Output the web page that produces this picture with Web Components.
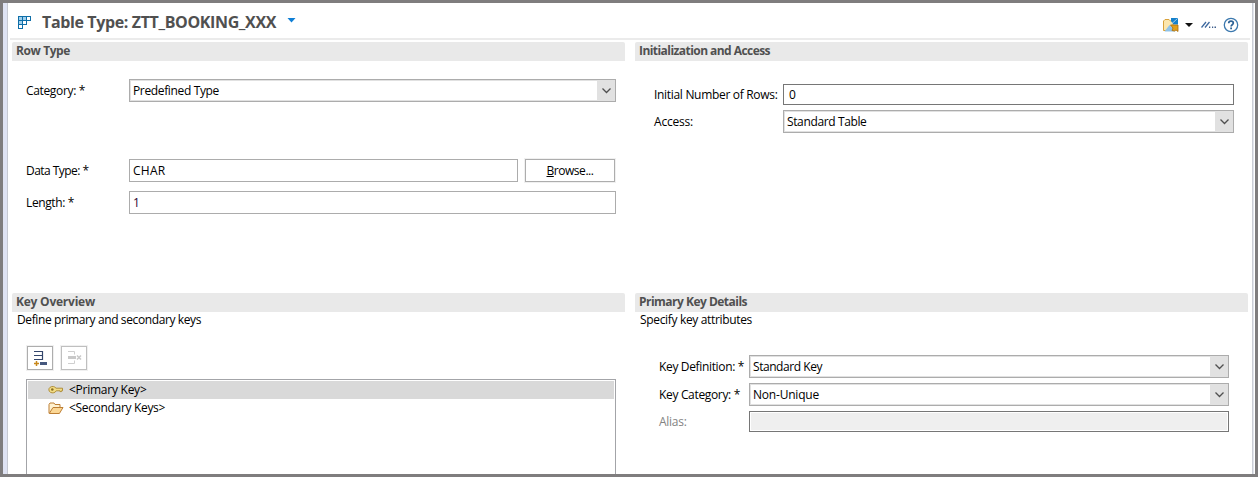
<!DOCTYPE html>
<html lang="en">
<head>
<meta charset="utf-8">
<title>Table Type: ZTT_BOOKING_XXX</title>
<style>
html,body{margin:0;height:100%;overflow:hidden}
body{font:12px/18px "Open Sans","Noto Sans",sans-serif;color:#000}
.form{display:grid;align-items:center}
.row-type{grid-template-columns:103px 389px 98px;grid-template-rows:23px 57px 23px 9px 23px;padding:18px 0 0 14px}
.access{grid-template-columns:129px 451px;grid-template-rows:21px 5px 23px;padding:23px 0 0 19px}
.details{grid-template-columns:90px 480px;grid-template-rows:23px 5px 23px 5px 21px;padding:25px 0 0 24px}
.span{grid-column:2/4}
.r3{grid-row:3}.r5{grid-row:5}
.push{margin-left:7px;width:90px}
.disabled{color:#838383}
.bar{display:flex;gap:8px;padding:17px 0 9px 15px}
</style>
</head>
<body>
<editor-frame>
  <editor-header slot="head"><fit-text width="233">Table Type: ZTT_BOOKING_XXX</fit-text></editor-header>
  <form-section heading="Row Type" hw="53">
    <div class="form row-type">
      <fit-text width="58">Category: *</fit-text>
      <combo-box class="span"><fit-text width="85">Predefined Type</fit-text></combo-box>
      <fit-text class="r3" width="61.5">Data Type: *</fit-text>
      <text-field class="r3"><fit-text width="31.5">CHAR</fit-text></text-field>
      <push-button class="r3 push"><fit-text width="46"><u>B</u>rowse...</fit-text></push-button>
      <fit-text class="r5" width="47">Length: *</fit-text>
      <text-field class="r5 span" style="color:#2c0030">1</text-field>
    </div>
  </form-section>
  <form-section heading="Initialization and Access" hw="130">
    <div class="form access">
      <fit-text width="122.5">Initial Number of Rows:</fit-text>
      <text-field dark>0</text-field>
      <fit-text class="r3" width="38">Access:</fit-text>
      <combo-box class="r3"><fit-text width="78.5">Standard Table</fit-text></combo-box>
    </div>
  </form-section>
  <form-section heading="Key Overview" hw="78">
    <fit-text slot="description" width="183">Define primary and secondary keys</fit-text>
    <div class="bar"><tool-button icon="add"></tool-button><tool-button icon="remove" disabled></tool-button></div>
    <key-tree>
      <tree-item icon="key" selected><fit-text width="76.5">&lt;Primary Key&gt;</fit-text></tree-item>
      <tree-item icon="folder"><fit-text width="95">&lt;Secondary Keys&gt;</fit-text></tree-item>
    </key-tree>
  </form-section>
  <form-section heading="Primary Key Details" hw="107">
    <fit-text slot="description" width="111">Specify key attributes</fit-text>
    <div class="form details">
      <fit-text width="84">Key Definition: *</fit-text>
      <combo-box><fit-text width="68">Standard Key</fit-text></combo-box>
      <fit-text class="r3" width="80">Key Category: *</fit-text>
      <combo-box class="r3"><fit-text width="65">Non-Unique</fit-text></combo-box>
      <fit-text class="r5 disabled" width="26.5">Alias:</fit-text>
      <text-field class="r5" dark disabled></text-field>
    </div>
  </form-section>
</editor-frame>
<script>
const icons = {
  table: `<svg width="14" height="14" viewBox="0 0 14 14" shape-rendering="crispEdges"><path fill="#0f6ea8" d="M0 0h13v5H9v4H5v4H0z"/><path fill="#9fd0ee" d="M1 1h3v3H1zM5 1h3v3H5zM1 5h3v3H1z"/><path fill="#fff" d="M9 1h3v3H9zM5 5h3v3H5zM1 9h3v3H1z"/></svg>`,
  share: `<svg width="16" height="16" viewBox="0 0 16 16"><path d="M.5 13.500V4l1.500-1.500h4L7.500 4H10v9.500z" fill="#fbe6ae" stroke="#d8a23c"/><path d="M1.500 14.500L6.500 8l6 6.500z" fill="#8fc3ea"/><path d="M8 1h7v6.500h-4.500L8 4z" fill="#1681cb"/><path d="M14.500 1.500L9 6.500" stroke="#fff" stroke-width=".6"/><path d="M7.500 8H15v6.500l-2-1.500-1.500 1-2.500-.5 1-2.500z" fill="#e3a01a" stroke="#aa6d0c" stroke-width=".8"/></svg>`,
  help: `<svg width="16" height="16" viewBox="0 0 16 16"><circle cx="8" cy="8" r="6.700" fill="#fff" stroke="#3b78ae" stroke-width="1.300"/><path d="M5.700 6.300c0-3 4.600-2.800 4.600-.2 0 1.600-2.200 1.700-2.200 3.400" fill="none" stroke="#2d6296" stroke-width="1.700"/><path d="M7.200 10.600h1.800v1.700H7.200z" fill="#2d6296"/></svg>`,
  add: `<svg width="16" height="16" viewBox="0 0 16 16"><path d="M2 1.500h8M2 5.500h8M2 9.500h8M10.500 1v9" fill="none" stroke="#34466c" stroke-width="1.200"/><path d="M8 12h7v3H8z" fill="#46587e"/><path d="M4.500 11v5M2 13.500h5" stroke="#c8881b" stroke-width="1.500"/></svg>`,
  remove: `<svg width="16" height="16" viewBox="0 0 16 16"><path d="M2 1.500h6.500v3M2 13.500h6.500v-3" fill="none" stroke="#cfcfcf"/><path d="M2 6h8v3H2z" fill="#c8c8c8"/><path d="M11 5.500l4 4m0-4l-4 4" stroke="#c8c8c8" stroke-width="1.500"/></svg>`,
  key: `<svg width="16" height="16" viewBox="0 0 16 16"><path d="M8 6.200h6.500v2.600h-1v.8h-1.500v-.8H8.200a3.800 3.200 0 1 1-.2-2.600z" fill="#f2dc85" stroke="#a98730" stroke-width=".9"/><circle cx="4.300" cy="7.500" r="1.300" fill="#8a6d24"/></svg>`,
  folder: `<svg width="16" height="16" viewBox="0 0 16 16"><path d="M1 13V4.500L2 3h4l1 1.500h5V7" fill="#fff1cf" stroke="#bd7f35"/><path d="M1.200 13.500L5 7.500h10l-3.600 6z" fill="#fbd795" stroke="#bd7f35"/></svg>`
};
const define = (name, html, setup) => customElements.define(name, class extends HTMLElement {
  constructor(){ super(); this.attachShadow({mode:'open'}); }
  connectedCallback(){
    this.shadowRoot.innerHTML = typeof html === 'function' ? html(this) : html;
    if (setup) setup(this);
  }
});

// Text run whose tracking is adjusted so that it fills the given width.
define('fit-text', `<style>:host{display:block;white-space:pre}span{display:inline-block}</style><span><slot></slot></span>`, el => {
  const span = el.shadowRoot.querySelector('span');
  const want = +el.getAttribute('width');
  const n = el.textContent.length;
  requestAnimationFrame(() => {
    span.style.letterSpacing = (want + 1 - span.getBoundingClientRect().width) / n + 'px';
  });
});

define('editor-frame', `<style>
:host{display:flex;flex-direction:column;box-sizing:border-box;width:1258px;height:477px;border:3px solid #7f7d7e;background:linear-gradient(90deg,#dfe3f3 4px,#c6c9d2 4px 5px,#fff 5px 1249px,#cbced5 1249px 1250px,#e2e5ed 1250px 1251px,#fff 1251px);overflow:hidden}
main{display:grid;grid-template-columns:613px 613px;grid-template-rows:251px 181px;column-gap:10px;padding-left:9px;flex:none}
</style><slot name="head"></slot><main><slot></slot></main>`);

define('editor-header', `<style>
:host{display:flex;align-items:center;box-sizing:border-box;height:37px;margin:0 5px 2px 7px;padding-left:8px;border-bottom:2px solid #ebebeb;font-weight:700;font-size:16px;line-height:24px;color:#505050;flex:none}
svg{display:block;flex:none}.title{margin:3px 0 0 10px;width:245px}
.tools{display:flex;align-items:center;margin:9px 11px 0 auto}
</style>${icons.table.replace('<svg','<svg style="margin-top:4px"')}<div class="title"><slot></slot></div>
<svg width="9" height="5" viewBox="0 0 9 5"><path d="M.5 0h8l-4 4.500z" fill="#0f7fd6"/></svg>
<div class="tools">${icons.share}<svg width="8" height="4" viewBox="0 0 8 4" style="margin-left:6px"><path d="M0 0h8L4 4z" fill="#111"/></svg>
<svg width="16" height="8" viewBox="0 0 16 8" style="margin:0 6px 0 8px"><path d="M.5 6.500L5 1M4 6.500L8.500 1" stroke="#3f6aa0" stroke-width="1.300"/><path d="M8 5.500h1.300V7H8zm3 0h1.200V7H11zm2.500 0H15V7h-1.500z" fill="#3f5f8c"/></svg>${icons.help}</div>`);

define('form-section', el => `<style>
:host{display:flex;flex-direction:column;min-width:0}
h2{margin:0;height:18px;padding:0 0 1px 4px;background:#e9e9e9;border-radius:2px 2px 0 0;font-size:12px;line-height:18px;color:#505050}
.d{padding-left:5px;height:19px;margin-top:-1px}
</style><h2><fit-text width="${el.getAttribute('hw')}">${el.getAttribute('heading')}</fit-text></h2>
${el.querySelector('[slot=description]') ? '<div class="d"><slot name="description"></slot></div>' : ''}<slot></slot>`);

define('combo-box', `<style>
:host{display:flex;box-sizing:border-box;height:23px;border:1px solid #acacac;padding:1px;background:#e1e1e1}
div{flex:1;background:#fff;padding-left:2px;line-height:19px}
svg{display:block;width:17px;height:19px}
</style><div><slot></slot></div><svg viewBox="0 0 17 19"><path d="M5.500 7.500l4 4 4-4" fill="none" stroke="#505050" stroke-width="1.300"/></svg>`);

define('text-field', `<style>
:host{display:block;box-sizing:border-box;height:23px;border:1px solid #acacac;padding:1px 3px;background:#fff;line-height:20px}
:host([dark]){height:21px;border-color:#767676;padding:0 5px;line-height:19px}
:host([disabled]){background:#efefef;box-shadow:inset 0 0 0 1px #fff}
</style><slot></slot>`);

define('push-button', `<style>
:host{display:flex;justify-content:center;align-items:center;box-sizing:border-box;height:23px;border:1px solid #adadad;background:#fff;box-shadow:0 0 0 1px #f0f0f0}
</style><slot></slot>`);

define('tool-button', el => `<style>
:host{display:flex;justify-content:center;align-items:center;box-sizing:border-box;width:26px;height:24px;border:1px solid #adadad;background:#fff;box-shadow:0 0 0 1px #f0f0f0}
:host([disabled]){border-color:#bfbfbf}
</style>${icons[el.getAttribute('icon')]}`);

define('key-tree', `<style>
:host{display:block;box-sizing:border-box;width:590px;height:120px;margin-left:14px;border:1px solid #a3a4a8;padding:1px;background:#fff;flex:none}
</style><slot></slot>`);

define('tree-item', el => `<style>
:host{display:flex;align-items:center;height:18px;padding-left:20px;gap:5px}
:host([selected]){background:#d9d9d9}
</style>${icons[el.getAttribute('icon')]}<slot></slot>`);
</script>
</body>
</html>
